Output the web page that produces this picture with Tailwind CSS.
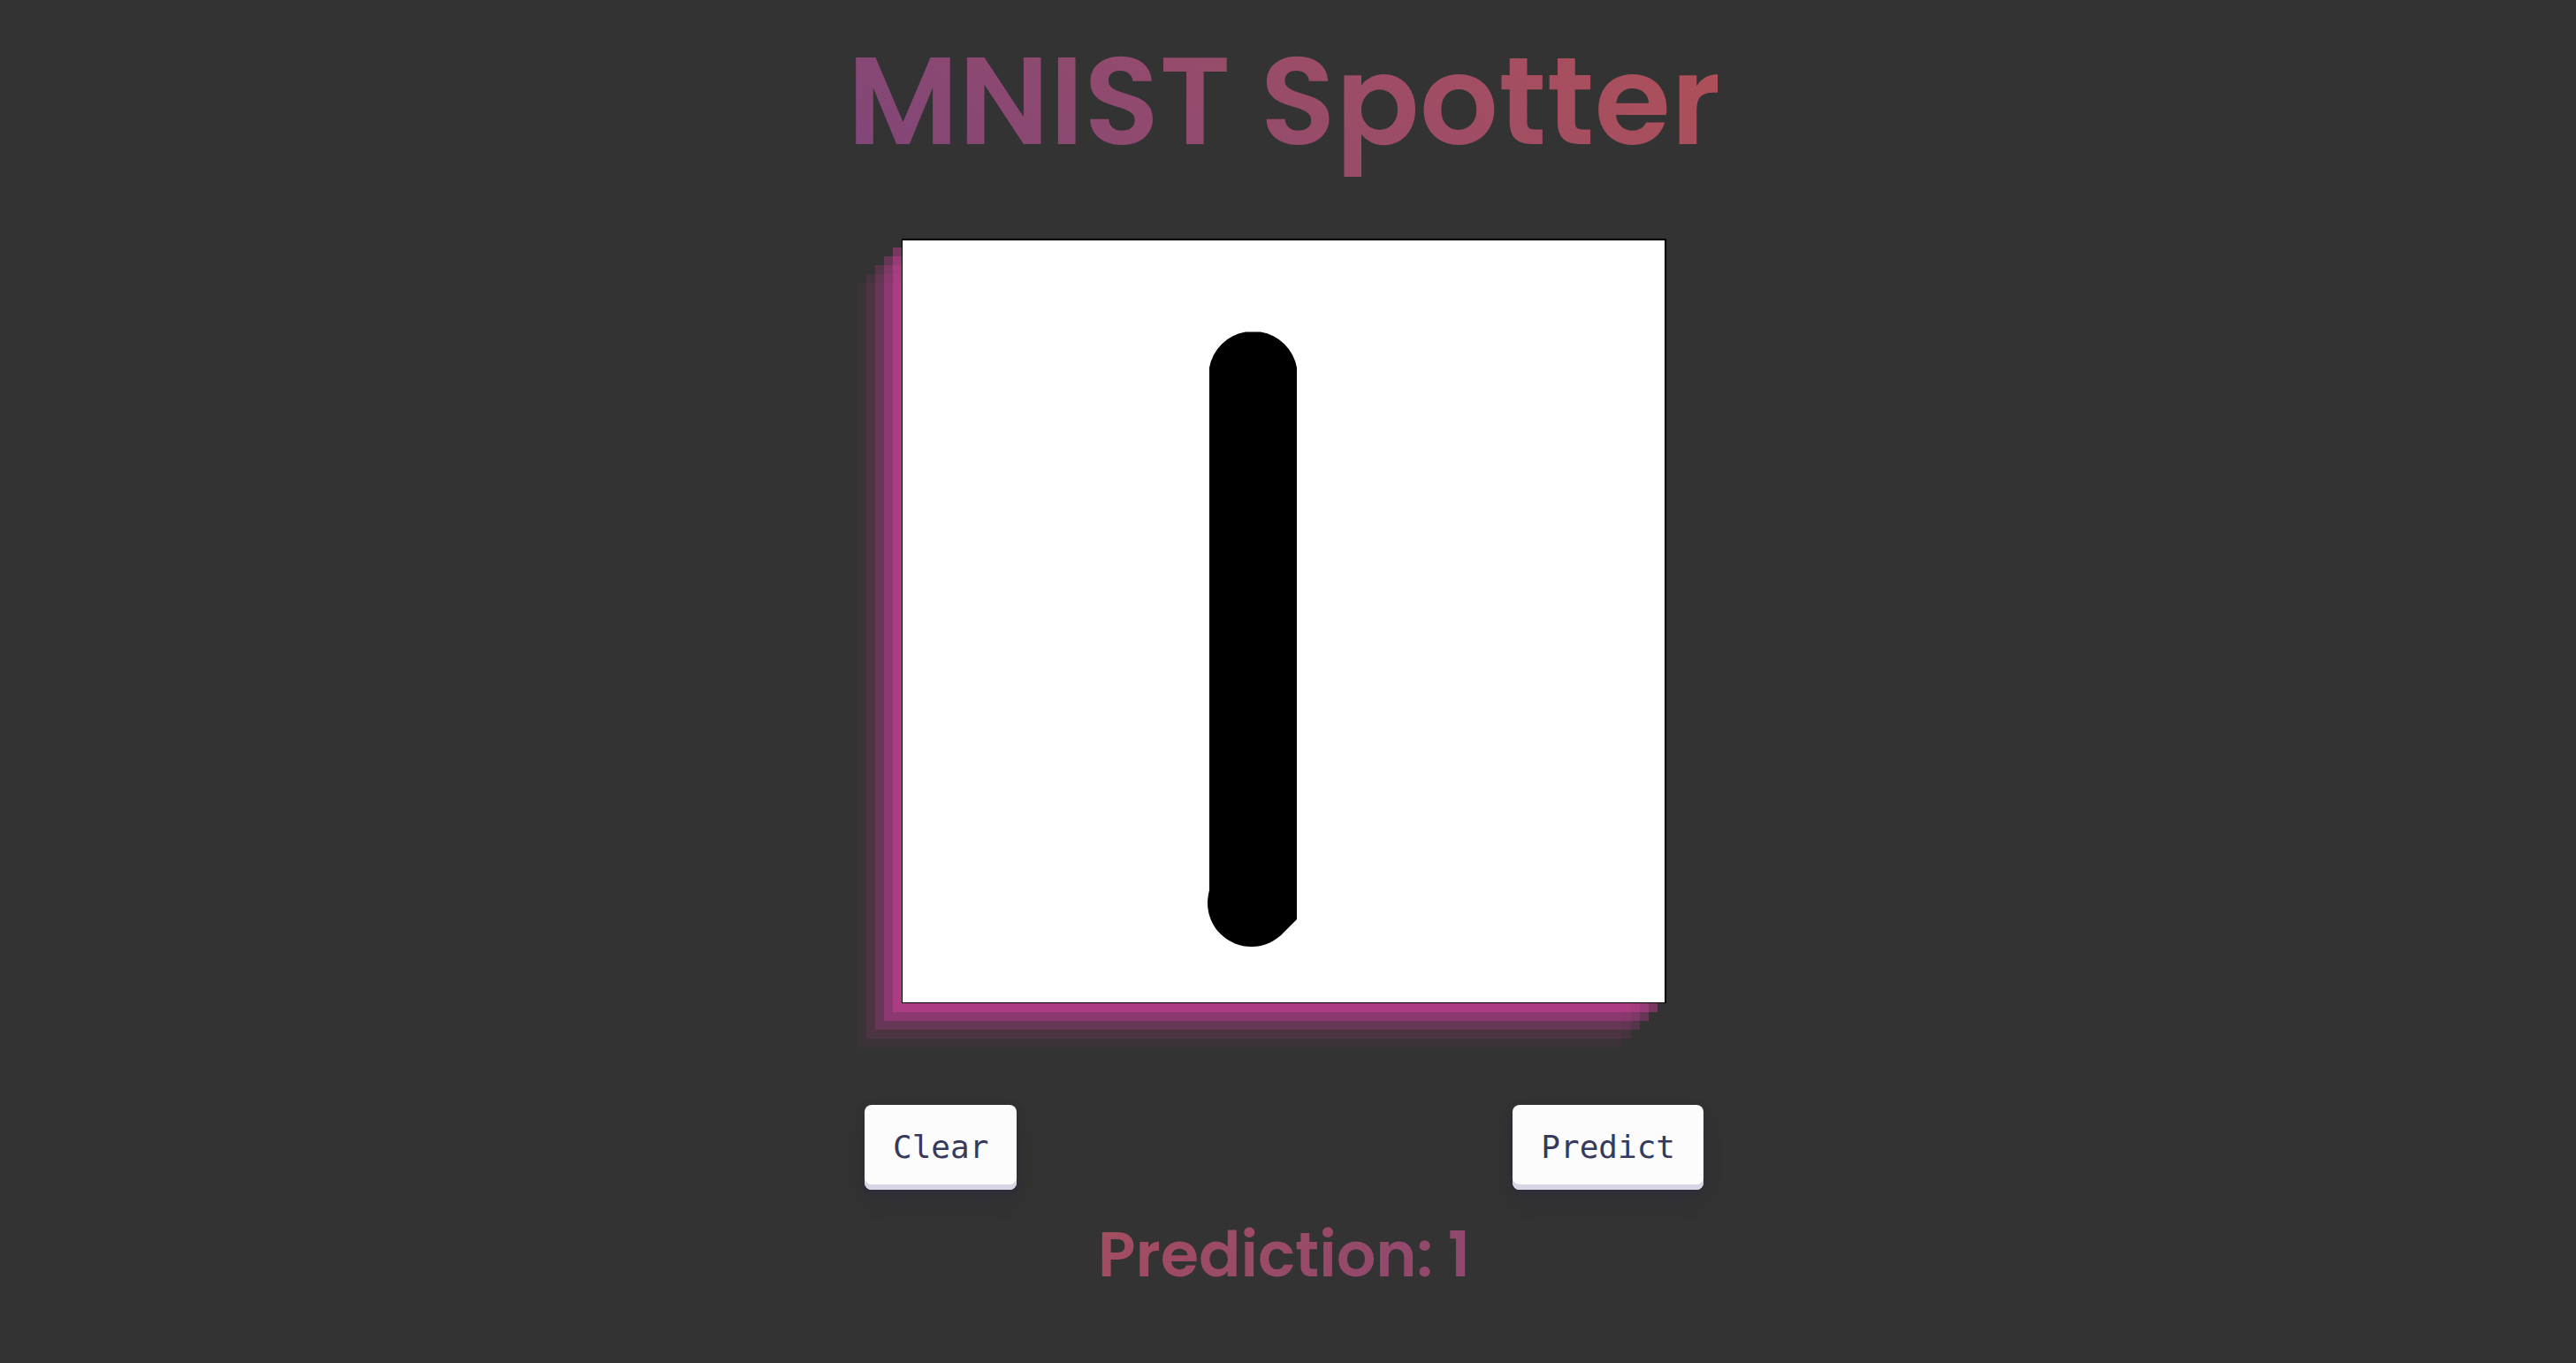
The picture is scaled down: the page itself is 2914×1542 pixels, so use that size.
<!DOCTYPE html>
<html lang="en">
<head>
<meta charset="utf-8">
<title>MNIST Spotter</title>
<script src="https://cdn.jsdelivr.net/npm/@tailwindcss/browser@4"></script>
</head>
<body class="min-h-screen bg-[#333333] pr-[9px] font-[Poppins,Inter,sans-serif]">
<main class="mx-auto flex w-full max-w-[997px] flex-col items-center pt-[10px]">
  <h1 class="w-full bg-linear-45 from-[#7f4579] to-[#b25056] bg-clip-text text-center text-[140px] leading-[208px] font-semibold whitespace-nowrap text-transparent">MNIST Spotter</h1>
  <div class="mt-[52px] aspect-square w-[865px] max-w-full border-t-2 border-r-2 border-b border-l border-black bg-white shadow-[-10px_10px_rgba(222,66,165,0.4),-20px_20px_rgba(222,66,165,0.3),-30px_30px_rgba(222,66,165,0.2),-40px_40px_rgba(222,66,165,0.1),-50px_50px_rgba(222,66,165,0.05)]">
    <svg class="block size-full" viewBox="1021 272 862 862" role="img" aria-label="Drawing area">
      <path d="M1368 416A50 50 0 0 1 1409 375.500H1426A50 50 0 0 1 1467 416V1040L1453 1054C1443 1065 1430 1071 1416 1071A49.500 49.500 0 0 1 1366 1022Q1366 1015 1368 1007Z"/>
    </svg>
  </div>
  <div class="mt-[115px] flex w-full justify-between px-6">
    <button type="button" class="h-24 rounded-lg bg-[#fcfcfd] px-8 font-['DejaVu_Sans_Mono',monospace] text-[36px] leading-none text-[#36395a] shadow-[0_4px_8px_rgba(45,35,66,0.4),0_14px_26px_-6px_rgba(45,35,66,0.3),inset_0_-6px_0_#d6d6e7]">Clear</button>
    <button type="button" class="h-24 rounded-lg bg-[#fcfcfd] px-8 font-['DejaVu_Sans_Mono',monospace] text-[36px] leading-none text-[#36395a] shadow-[0_4px_8px_rgba(45,35,66,0.4),0_14px_26px_-6px_rgba(45,35,66,0.3),inset_0_-6px_0_#d6d6e7]">Predict</button>
  </div>
  <h2 class="mt-[22px] w-full bg-linear-[-45deg] from-[#7f4579] to-[#b25056] bg-clip-text text-center text-[70px] leading-[104px] font-semibold text-transparent">Prediction: 1</h2>
</main>
</body>
</html>
